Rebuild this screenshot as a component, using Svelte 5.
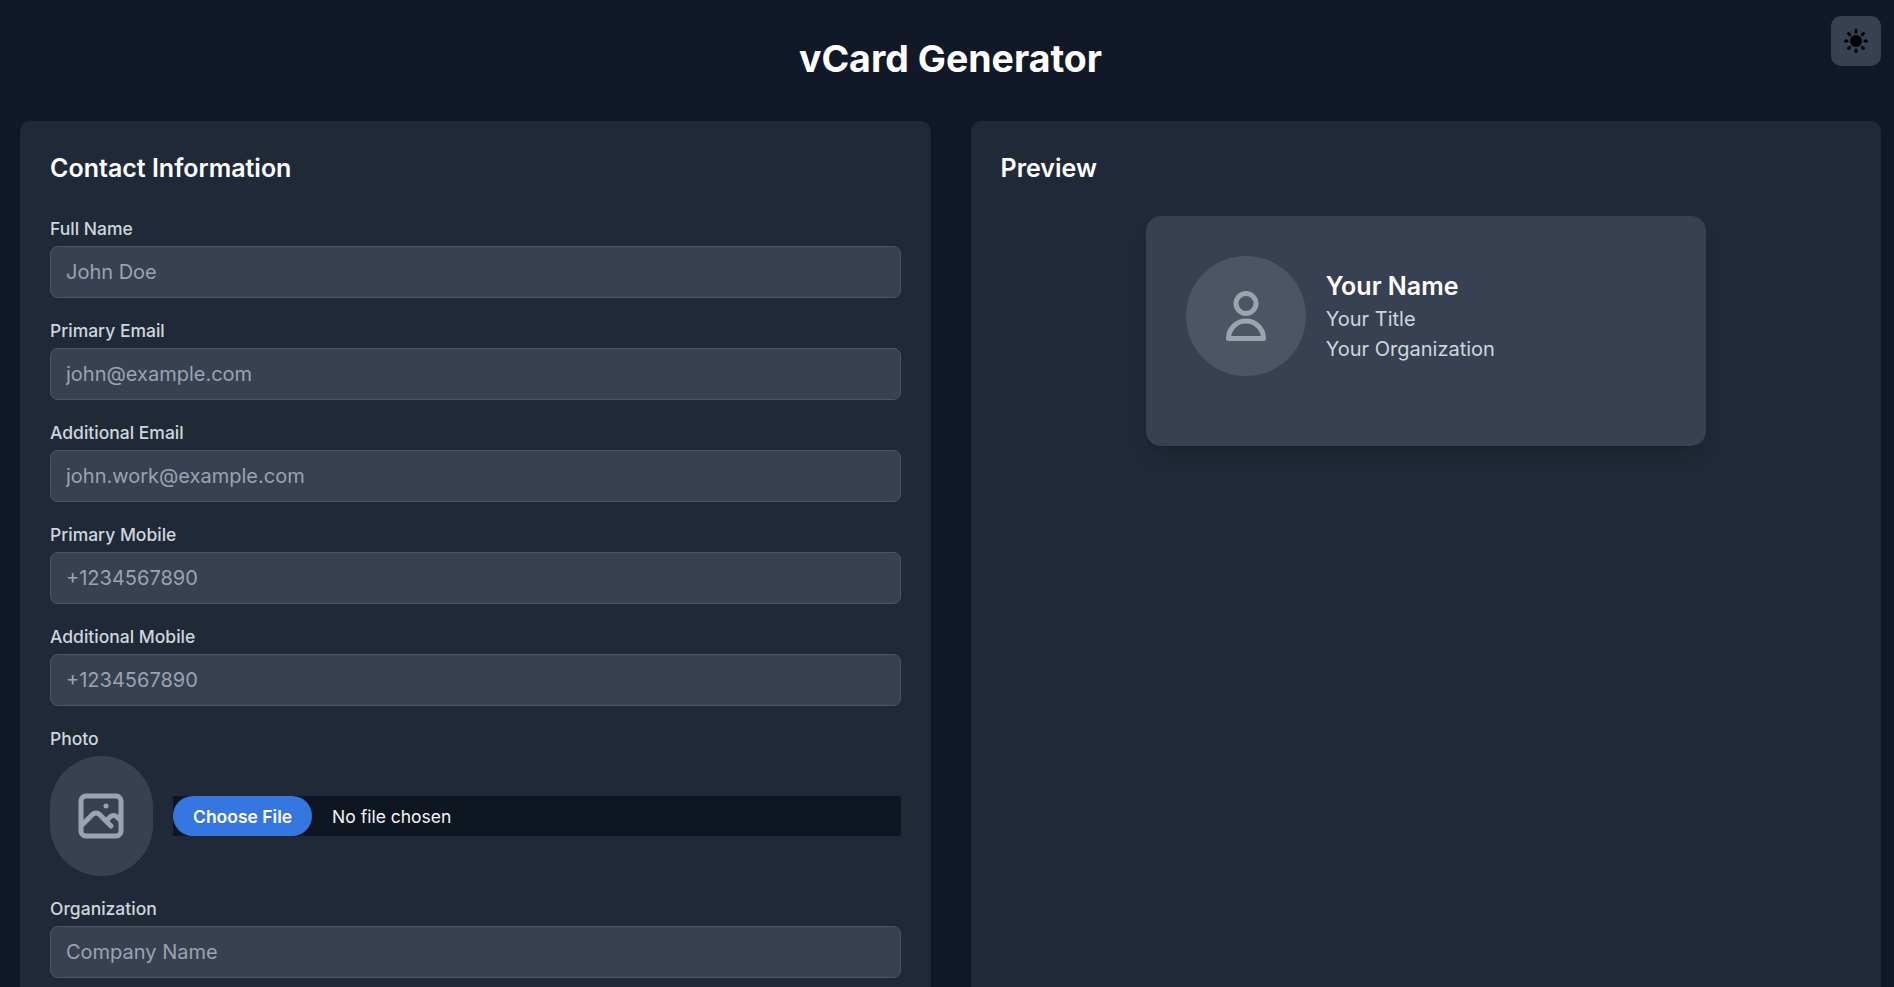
<script>
  const fields = [
    { label: 'Full Name', placeholder: 'John Doe', id: 'name' },
    { label: 'Primary Email', placeholder: 'john@example.com', id: 'email' },
    { label: 'Additional Email', placeholder: 'john.work@example.com', id: 'email2' },
    { label: 'Primary Mobile', placeholder: '+1234567890', id: 'mobile' },
    { label: 'Additional Mobile', placeholder: '+1234567890', id: 'mobile2' }
  ];
</script>

<div class="page">
  <button class="theme" aria-label="Toggle theme">
    <svg viewBox="0 0 20 20" width="30" height="30" fill="#000">
      <path fill-rule="evenodd" clip-rule="evenodd" d="M10 2a1 1 0 011 1v1a1 1 0 11-2 0V3a1 1 0 011-1zm4 8a4 4 0 11-8 0 4 4 0 018 0zm-.464 4.95l.707.707a1 1 0 001.414-1.414l-.707-.707a1 1 0 00-1.414 1.414zm2.12-10.607a1 1 0 010 1.414l-.706.707a1 1 0 11-1.414-1.414l.707-.707a1 1 0 011.414 0zM17 11a1 1 0 100-2h-1a1 1 0 100 2h1zm-7 4a1 1 0 011 1v1a1 1 0 11-2 0v-1a1 1 0 011-1zM5.05 6.464A1 1 0 106.465 5.05l-.708-.707a1 1 0 00-1.414 1.414l.707.707zm1.414 8.486l-.707.707a1 1 0 01-1.414-1.414l.707-.707a1 1 0 011.414 1.414zM4 11a1 1 0 100-2H3a1 1 0 000 2h1z" />
    </svg>
  </button>
  <h1>vCard Generator</h1>
  <main>
    <section class="panel">
      <h2>Contact Information</h2>
      <form>
        {#each fields as f}
          <div class="field">
            <label for={f.id}>{f.label}</label>
            <input class="text" id={f.id} placeholder={f.placeholder} />
          </div>
        {/each}
        <div class="field">
          <label for="photo">Photo</label>
          <div class="photo-row">
            <div class="thumb">
              <svg viewBox="0 0 24 24" width="60" height="60" fill="none" stroke="#9ca3af" stroke-width="2" stroke-linecap="round" stroke-linejoin="round">
                <path d="M4 16l4.586-4.586a2 2 0 012.828 0L16 16m-2-2l1.586-1.586a2 2 0 012.828 0L20 14m-6-6h.01M6 20h12a2 2 0 002-2V6a2 2 0 00-2-2H6a2 2 0 00-2 2v12a2 2 0 002 2z" />
              </svg>
            </div>
            <input class="file" type="file" id="photo" />
          </div>
        </div>
        <div class="field">
          <label for="org">Organization</label>
          <input class="text" id="org" placeholder="Company Name" />
        </div>
      </form>
    </section>
    <section class="panel">
      <h2>Preview</h2>
      <div class="card">
        <div class="avatar">
          <svg viewBox="0 0 24 24" width="60" height="60" fill="none" stroke="#9ca3af" stroke-width="2" stroke-linecap="round" stroke-linejoin="round">
            <path d="M16 7a4 4 0 11-8 0 4 4 0 018 0zM12 14a7 7 0 00-7 7h14a7 7 0 00-7-7z" />
          </svg>
        </div>
        <div class="who">
          <h3>Your Name</h3>
          <p>Your Title</p>
          <p>Your Organization</p>
        </div>
      </div>
    </section>
  </main>
</div>

<style>
  :global(body) {
    background: #111827;
    overflow: hidden;
  }
  .page, .page * { box-sizing: border-box; }
  .page {
    position: relative;
    height: 987px;
    overflow: hidden;
    padding: 36px 13px 0 20px;
    background: #111827;
    color: #fff;
    font: 20px/30px Inter, sans-serif;
  }
  h1, h2, h3, p { margin: 0; }
  h1 {
    font-size: 37.5px;
    line-height: 45px;
    font-weight: 700;
    text-align: center;
    margin-bottom: 40px;
  }
  .theme {
    position: absolute;
    top: 16px;
    right: 13px;
    display: flex;
    padding: 10px;
    border: 0;
    border-radius: 10px;
    background: #374151;
  }
  main {
    display: grid;
    grid-template-columns: 1fr 1fr;
    gap: 40px;
  }
  .panel {
    padding: 30px;
    min-height: 900px;
    border-radius: 10px;
    background: #1f2937;
    box-shadow: 0 5px 7.5px -1px rgba(0, 0, 0, 0.1), 0 2.5px 5px -2px rgba(0, 0, 0, 0.1);
  }
  h2 {
    font-size: 25px;
    line-height: 35px;
    font-weight: 600;
    margin-bottom: 30px;
  }
  form {
    display: flex;
    flex-direction: column;
    gap: 20px;
  }
  label {
    display: block;
    margin-bottom: 5px;
    color: #d1d5db;
    font-size: 17.5px;
    line-height: 25px;
    font-weight: 500;
  }
  .text {
    display: block;
    width: 100%;
    height: 52px;
    padding: 10px 15px;
    border: 1px solid #4b5563;
    border-radius: 7.5px;
    background: #374151;
    color: #fff;
    font: 20px/30px Inter, sans-serif;
  }
  .text::placeholder { color: #9ca3af; opacity: 1; }
  .photo-row {
    display: flex;
    align-items: center;
    gap: 20px;
  }
  .thumb, .avatar {
    display: flex;
    flex: none;
    align-items: center;
    justify-content: center;
    width: 120px;
    height: 120px;
    border-radius: 9999px;
    background: #4b5563;
  }
  .thumb { width: 103px; padding-right: 1px; background: #374151; }
  .file {
    flex: 1;
    min-width: 0;
    height: 40px;
    background: #0e1621;
    color: #f3f4f6;
    font: 17.5px/25px Inter, sans-serif;
  }
  .file::file-selector-button {
    height: 40px;
    margin: 0 20px 0 0;
    padding: 0 20px;
    border: 0;
    border-radius: 9999px;
    background: #3576e0;
    color: #fff;
    font: 600 17.5px/25px Inter, sans-serif;
  }
  .card {
    display: flex;
    align-items: flex-start;
    gap: 20px;
    width: 560px;
    height: 230px;
    margin: 0 auto;
    padding: 40px;
    border-radius: 15px;
    background: #374151;
    box-shadow: 0 12.5px 18.75px -3.75px rgba(0, 0, 0, 0.1), 0 5px 7.5px -5px rgba(0, 0, 0, 0.1);
  }
  .who {
    display: flex;
    flex-direction: column;
    justify-content: center;
    height: 120px;
  }
  h3 {
    font-size: 25px;
    line-height: 35px;
    font-weight: 600;
  }
  p { color: #d1d5db; }
</style>
